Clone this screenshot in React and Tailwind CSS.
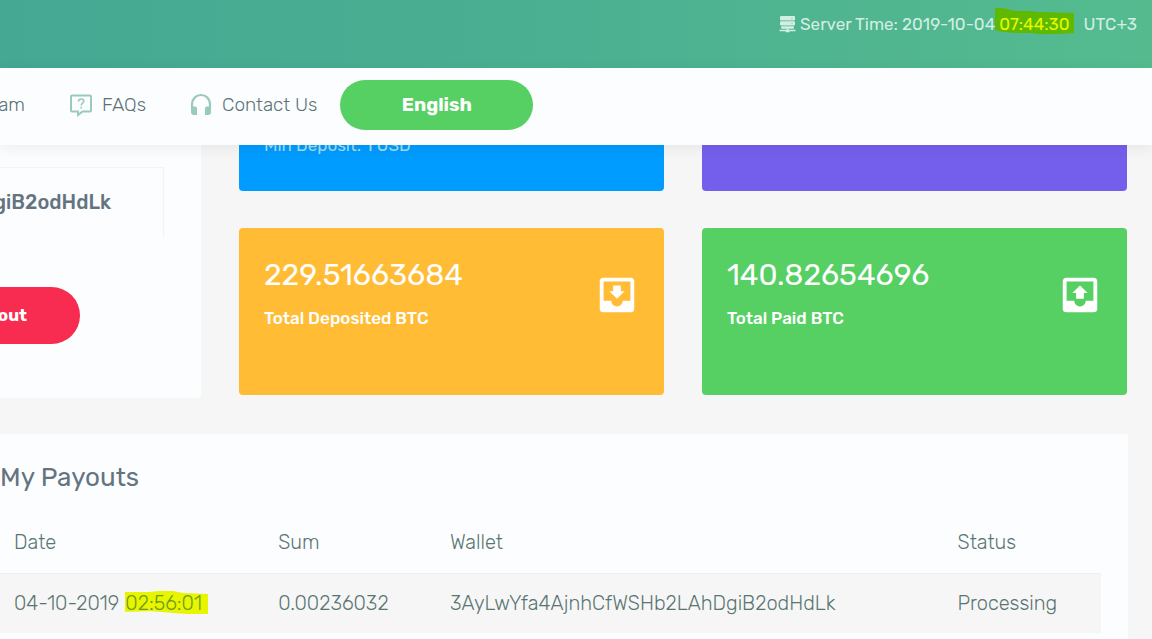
const payouts = [
  {
    date: "04-10-2019",
    time: "02:56:01",
    sum: "0.00236032",
    wallet: "3AyLwYfa4AjnhCfWSHb2LAhDgiB2odHdLk",
    status: "Processing"
  }
]

const ServerIcon = () => (
  <svg viewBox="0 0 17 17" className="h-[17px] w-[17px] shrink-0" fill="currentColor" aria-hidden="true">
    <rect x="1" y="0" width="15" height="4.500" rx="1" />
    <rect x="1" y="5.200" width="15" height="4.300" rx="1" />
    <rect x="2" y="10.200" width="13" height="2.500" rx="1" />
    <path d="M7.500 12.500h2v1.200h7v1.500H10.500v1h-4v-1H0.500v-1.500h7z" />
    <path d="M12 2.500h2M12 7.500h2" stroke="#a9dcc6" strokeWidth="1" />
  </svg>
)

const FaqIcon = () => (
  <svg viewBox="0 0 24 24" className="h-6 w-6 shrink-0" fill="none" stroke="currentColor" aria-hidden="true">
    <path d="M3 2.500h18a1 1 0 0 1 1 1v14a1 1 0 0 1-1 1h-7.500L9 22v-3.500H3a1 1 0 0 1-1-1v-14a1 1 0 0 1 1-1z" strokeWidth="2" />
    <path d="M9.500 8.500c0-1.500 1-2.500 2.700-2.500s2.600 1 2.600 2.300c0 2-2.600 1.900-2.600 4.200M12.200 13.800v1.600" strokeWidth="1.600" />
  </svg>
)

const HeadphonesIcon = () => (
  <svg viewBox="0 0 22 24" className="h-6 w-[22px] shrink-0" fill="none" stroke="currentColor" aria-hidden="true">
    <path d="M2 15v-4a9 9 0 0 1 18 0v4" strokeWidth="2.200" />
    <path d="M1 13.500h4a2 2 0 0 1 2 2V22H4a3 3 0 0 1-3-3zM21 13.500h-4a2 2 0 0 0-2 2V22h3a3 3 0 0 0 3-3z" fill="currentColor" stroke="none" />
  </svg>
)

const InboxIcon = ({ up }) => (
  <svg viewBox="0 0 24 24" className="h-[46px] w-[46px] shrink-0" fill="currentColor" aria-hidden="true">
    <path d="M19 15h-4a3 3 0 0 1-6 0H5V5h14m0-2H5a2 2 0 0 0-2 2v14a2 2 0 0 0 2 2h14a2 2 0 0 0 2-2V5a2 2 0 0 0-2-2z" />
    {up ? <path d="M14 14h-4v-3H8l4-4 4 4h-2z" /> : <path d="M16 10h-2V7h-4v3H8l4 4z" />}
  </svg>
)

const StatCard = ({ value, label, up, color }) => (
  <div className={`flex h-[167px] items-start justify-between rounded py-6 pl-[25px] pr-6 text-white ${color}`}>
    <div className="pt-1">
      <div className="text-3xl leading-[38px]">{value}</div>
      <div className="mt-3 text-[17px] font-medium leading-6">{label}</div>
    </div>
    <div className="pt-5">
      <InboxIcon up={up} />
    </div>
  </div>
)

const TopBar = () => (
  <header className="flex h-[68px] items-start justify-end bg-linear-to-r from-[#44a893] via-[#4bb091] to-[#55bb8f] px-[15px] pt-3 text-[17px] leading-6 text-[#d3eee2]">
    <div className="flex items-center whitespace-nowrap">
      <ServerIcon />
      <span className="ml-1">Server Time: 2019-10-04</span>
      <span className="relative ml-1 text-[#e6fa00]">
        <svg viewBox="0 0 79 26" preserveAspectRatio="none" className="absolute -left-1 -top-1 h-[26px] w-[79px]" aria-hidden="true">
          <path d="M0 0l8 0 12 3 15 0 8 1 36 1v20l-15 1h-20l-8-1-14 0-14-1-8-2z" fill="#5fb900" />
        </svg>
        <span className="relative">07:44:30</span>
      </span>
      <span className="ml-[14px]">UTC+3</span>
    </div>
  </header>
)

const NavBar = () => (
  <nav className="relative z-10 flex h-[77px] items-center bg-[#fbfdff] pb-[3px] text-[19px] font-light text-[#5c7178] shadow-[0_3px_14px_rgba(0,0,0,0.07)]">
    <a href="#team" className="flex w-[25px] justify-end">am</a>
    <a href="#faqs" className="ml-11 flex items-center gap-[9px]">
      <span className="text-[#9acab9]"><FaqIcon /></span>
      FAQs
    </a>
    <a href="#contact" className="ml-11 flex items-center gap-[10px]">
      <span className="text-[#9acab9]"><HeadphonesIcon /></span>
      Contact Us
    </a>
    <button type="button" className="ml-[23px] h-[50px] w-[193px] rounded-full bg-[#56cf63] text-[19px] font-bold text-white">
      English
    </button>
  </nav>
)

const PayoutsTable = () => (
  <section className="mt-9 mr-6 flex-1 bg-[#fbfdff] pt-6 pr-[27px]">
    <h2 className="text-[26px] leading-10 text-[#64747f]">My Payouts</h2>
    <table className="mt-[13px] w-full table-fixed text-left text-xl font-light text-[#597572]">
      <thead>
        <tr className="h-[62px]">
          <th className="w-[24%] pl-[14px] font-light">Date</th>
          <th className="w-[15.6%] pl-[14px] font-light">Sum</th>
          <th className="w-[46.1%] pl-[14px] font-light">Wallet</th>
          <th className="pl-[14px] font-light">Status</th>
        </tr>
      </thead>
      <tbody>
        {payouts.map((p) => (
          <tr key={p.wallet} className="h-[60px] border-t border-[#eef0f0] bg-[#f6f6f6]">
            <td className="whitespace-nowrap pl-[14px]">
              {p.date}{" "}
              <span className="relative ml-px inline-block text-[#6b9c16]">
                <svg viewBox="0 0 83 24" preserveAspectRatio="none" className="absolute left-0 top-0.5 h-6 w-[83px]" aria-hidden="true">
                  <path d="M0 1l24 0 10-1 14 0 10 2 25 1v20l-20 0-14-1-24-2-25 1z" fill="#e8f400" />
                </svg>
                <span className="relative">{p.time}</span>
              </span>
            </td>
            <td className="pl-[14px]">{p.sum}</td>
            <td className="pl-[14px]">{p.wallet}</td>
            <td className="pl-[14px]">{p.status}</td>
          </tr>
        ))}
      </tbody>
    </table>
  </section>
)

const App = () => {
  return (
    <div className="flex min-h-screen flex-col overflow-hidden bg-[#f6f6f6] font-[Rubik,Roboto,sans-serif]">
      <TopBar />
      <NavBar />
      <main className="flex flex-1 flex-col">
        <div className="flex gap-[38px] pr-[25px]">
          <section className="h-[253px] w-[201px] shrink-0 rounded-br bg-[#fbfdff] pt-[22px]">
            <div className="flex h-[70px] w-[164px] items-center justify-end overflow-hidden border-t border-r border-[#f1f4f5] pr-[52px] pb-0.5 text-xl font-medium text-[#64747f]">
              giB2odHdLk
            </div>
            <button type="button" className="mt-[50px] flex h-[57px] w-20 items-center justify-end rounded-r-full bg-[#f72c50] pr-[53px] text-[17px] font-bold text-white">
              out
            </button>
          </section>
          <div className="grid flex-1 grid-cols-2 gap-x-[38px] gap-y-[37px] self-start">
            <div className="flex h-[46px] items-start overflow-hidden rounded-b bg-[#009cff] pl-[25px]">
              <span className="-mt-3 text-[17px] leading-6 text-[#a4dcf0]">Min Deposit: 1 USD</span>
            </div>
            <div className="h-[46px] rounded-b bg-[#745fec]" />
            <StatCard value="229.51663684" label="Total Deposited BTC" color="bg-[#ffbc34]" />
            <StatCard value="140.82654696" label="Total Paid BTC" color="bg-[#56cf63]" up />
          </div>
        </div>
        <PayoutsTable />
      </main>
    </div>
  )
}

export default App
